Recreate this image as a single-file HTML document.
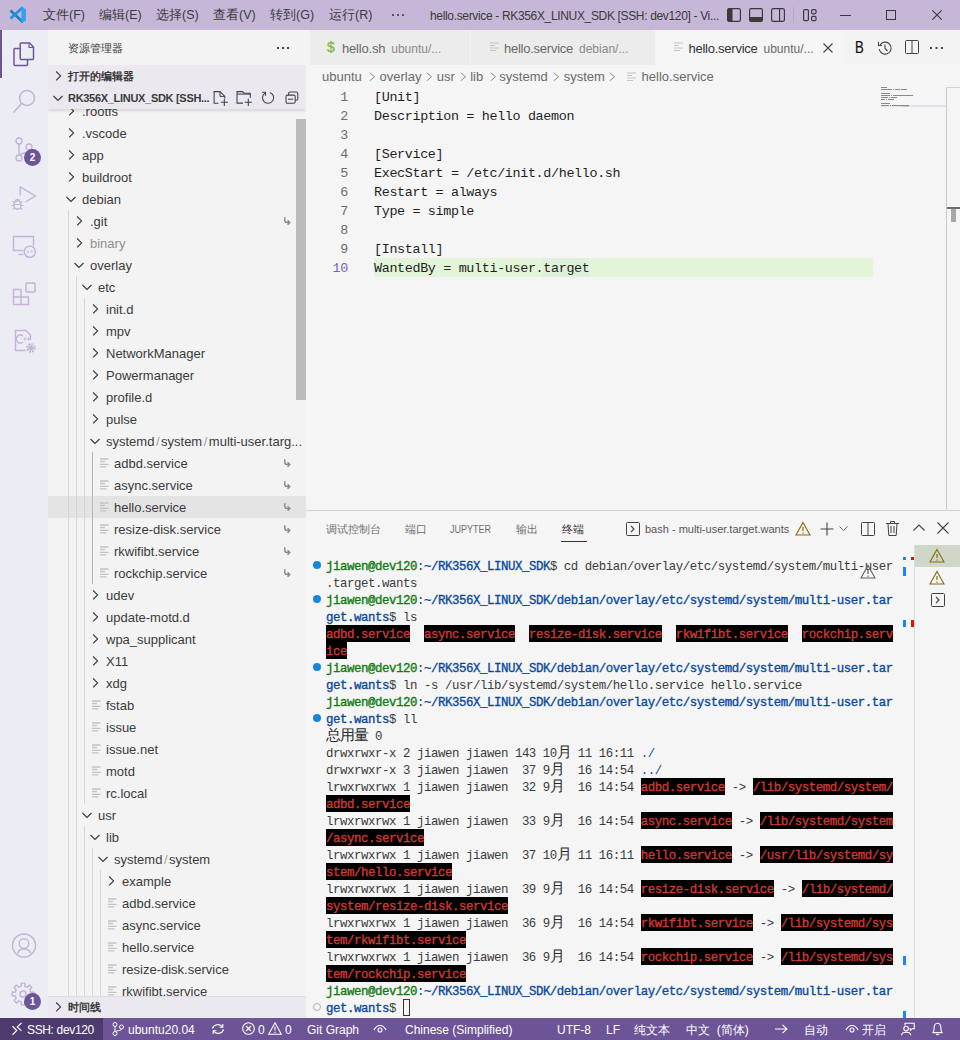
<!DOCTYPE html><html><head><meta charset="utf-8"><style>
*{box-sizing:border-box;margin:0;padding:0}
html,body{width:960px;height:1040px;overflow:hidden;background:#f5f5f5}
body{position:relative;font-family:"Liberation Sans", sans-serif;font-size:13px;color:#3b3b3b}
.a{position:absolute}
.nw{white-space:nowrap}
svg{position:absolute;overflow:visible}
#title{left:0;top:0;width:960px;height:30px;background:#c6b7d9}
#act{left:0;top:30px;width:48px;height:988px;background:#ececf5}
#side{left:48px;top:30px;width:258px;height:988px;background:#f3f3f3;overflow:hidden}
#tabs{left:306px;top:30px;width:654px;height:35px;background:#f3f3f3}
#status{left:0;top:1018px;width:960px;height:22px;background:#6c5497;color:#fff;font-size:12px}
.row{position:absolute;left:0;width:258px;height:22px;line-height:22px;white-space:nowrap}
.term{font-family:"Liberation Mono", monospace;font-size:12.4px;letter-spacing:-0.44px;line-height:17px;white-space:pre;color:#3b3b3b}
.rd{font-weight:normal;-webkit-text-stroke:0.35px #d03a32;display:inline-block;vertical-align:top;margin-top:-2px;padding-top:2px;height:17px;line-height:17px;color:#d03a32;background:#000}
.code{font-family:"Liberation Mono", monospace;font-size:13.4px;letter-spacing:-0.34px;line-height:19px;white-space:pre;color:#1f1f1f}
</style></head><body><div id="title" class="a">
<svg style="left:10px;top:7px" width="17" height="17"><path d="M1.5 4.5 L12 14.3" stroke="#1a7fcc" stroke-width="2.7" stroke-linecap="square"/><path d="M1.5 10.6 L12 1.2" stroke="#2590dc" stroke-width="2.7" stroke-linecap="square"/><path d="M11.4 0 L15.9 2.1 V13.7 L11.4 15.8 Z" fill="#32a2ee"/></svg>
<div class="a nw" style="left:43px;top:7px;font-size:12.5px;line-height:16px;color:#3a3a3a">文件(F)</div>
<div class="a nw" style="left:99px;top:7px;font-size:12.5px;line-height:16px;color:#3a3a3a">编辑(E)</div>
<div class="a nw" style="left:156px;top:7px;font-size:12.5px;line-height:16px;color:#3a3a3a">选择(S)</div>
<div class="a nw" style="left:213px;top:7px;font-size:12.5px;line-height:16px;color:#3a3a3a">查看(V)</div>
<div class="a nw" style="left:270px;top:7px;font-size:12.5px;line-height:16px;color:#3a3a3a">转到(G)</div>
<div class="a nw" style="left:329px;top:7px;font-size:12.5px;line-height:16px;color:#3a3a3a">运行(R)</div>
<svg style="left:392px;top:14px" width="12" height="2"><rect x="0" y="0" width="2" height="2" fill="#555"/><rect x="5" y="0" width="2" height="2" fill="#555"/><rect x="10" y="0" width="2" height="2" fill="#555"/></svg>
<div class="a nw" style="left:430px;top:8px;font-size:12px;letter-spacing:-0.34px;line-height:16px;color:#3a3a3a">hello.service - RK356X_LINUX_SDK [SSH: dev120] - Vi...</div>
<svg style="left:727px;top:8px" width="14" height="14"><rect x="0.6" y="0.6" width="12.8" height="12.8" rx="1.6" fill="none" stroke="#3a3a3a" stroke-width="1.2"/><path d="M2 0.6 H5.5 V13.4 H2 Q0.6 13.4 0.6 12 V2 Q0.6 0.6 2 0.6 Z" fill="#3a3a3a"/></svg>
<svg style="left:749px;top:8px" width="14" height="14"><rect x="0.6" y="0.6" width="12.8" height="12.8" rx="1.6" fill="none" stroke="#3a3a3a" stroke-width="1.2"/><path d="M0.6 9 H13.4 V12 Q13.4 13.4 12 13.4 H2 Q0.6 13.4 0.6 12 Z" fill="#3a3a3a"/></svg>
<svg style="left:771px;top:8px" width="14" height="14"><rect x="0.6" y="0.6" width="12.8" height="12.8" rx="1.6" fill="none" stroke="#3a3a3a" stroke-width="1.2"/><path d="M8.6 0.6 V13.4" stroke="#3a3a3a" stroke-width="1.2"/></svg>
<div class="a" style="left:793px;top:7px;width:1px;height:16px;background:#b5a6c8"></div>
<svg style="left:803px;top:9px" width="14" height="12"><rect x="0.6" y="0.6" width="4.8" height="11" rx="1.2" fill="none" stroke="#3a3a3a" stroke-width="1.2"/><rect x="8.6" y="0.6" width="4.4" height="4.2" rx="1.2" fill="none" stroke="#3a3a3a" stroke-width="1.2"/><rect x="8.6" y="7.4" width="4.4" height="4.2" rx="1.2" fill="none" stroke="#3a3a3a" stroke-width="1.2"/></svg>
<div class="a" style="left:840px;top:15px;width:10.5px;height:1px;background:#3a3a3a"></div>
<div class="a" style="left:886px;top:10px;width:10px;height:10px;border:1px solid #3a3a3a"></div>
<svg style="left:932px;top:10px" width="10" height="10"><path d="M0.3 0.3 L9.7 9.7 M9.7 0.3 L0.3 9.7" stroke="#3a3a3a" stroke-width="1.1"/></svg>
</div>
<div id="act" class="a">
<div class="a" style="left:0;top:0;width:2px;height:48px;background:#6c5497"></div>
<svg style="left:13px;top:12px" width="22" height="24" viewBox="0 0 22 24"><path d="M8.2 1 H16.5 L20.5 5 V16.5 Q20.5 17.5 19.5 17.5 H8.2 Q7.2 17.5 7.2 16.5 V2 Q7.2 1 8.2 1 Z" fill="none" stroke="#6c559a" stroke-width="1.5"/><path d="M16 1.5 V5.5 H20" fill="none" stroke="#6c559a" stroke-width="1.1"/><path d="M7.2 6.5 H2 Q1 6.5 1 7.5 V22.5 Q1 23.5 2 23.5 H13.5 Q14.5 23.5 14.5 22.5 V17.5" fill="none" stroke="#6c559a" stroke-width="1.5"/></svg>
<svg style="left:12px;top:58px" width="24" height="24"><circle cx="15" cy="10" r="7.5" fill="none" stroke="#c3b3d6" stroke-width="1.5"/><path d="M9.8 15.2 L1.5 24.5" stroke="#c3b3d6" stroke-width="1.6"/></svg>
<svg style="left:12px;top:107px" width="24" height="26"><circle cx="7" cy="4" r="3" fill="none" stroke="#c3b3d6" stroke-width="1.4"/><circle cx="7" cy="21" r="3" fill="none" stroke="#c3b3d6" stroke-width="1.4"/><circle cx="17" cy="10" r="3" fill="none" stroke="#c3b3d6" stroke-width="1.4"/><path d="M7 7 V18 M17 13 C17 17 9 15 8 18" fill="none" stroke="#c3b3d6" stroke-width="1.4"/></svg>
<div class="a" style="left:24px;top:119px;width:17px;height:17px;border-radius:50%;background:#6c5497;color:#fff;font-size:10px;line-height:17px;text-align:center;font-weight:bold">2</div>
<svg style="left:11px;top:156px" width="26" height="26"><path d="M9.2 9.5 V0.8 L24.5 10 L14.5 16" fill="none" stroke="#c3b3d6" stroke-width="1.4" stroke-linejoin="round"/><ellipse cx="6.5" cy="19" rx="3.6" ry="4.3" fill="#ececf5" stroke="#c3b3d6" stroke-width="1.4"/><path d="M1.5 15.5 L3.5 16.5 M11.5 15.5 L9.5 16.5 M0.5 19.5 H3 M12.5 19.5 H10 M1.5 23.5 L3.5 22 M11.5 23.5 L9.5 22 M4 14.5 L6.5 13.5 L9 14.5 M3.2 18.5 H9.8" fill="none" stroke="#c3b3d6" stroke-width="1.2"/></svg>
<svg style="left:12px;top:205px" width="26" height="24"><path d="M21.5 11 V1.5 H1.5 V15.5 H11.5" fill="none" stroke="#c3b3d6" stroke-width="1.4"/><path d="M6.5 19.5 H11.5" stroke="#c3b3d6" stroke-width="1.4"/><circle cx="17.8" cy="16.7" r="5.6" fill="none" stroke="#c3b3d6" stroke-width="1.4"/><path d="M15.2 15.5 L16.7 17 L15.2 18.5 M20.5 15 L19 16.5 L20.5 18" fill="none" stroke="#c3b3d6" stroke-width="1"/></svg>
<svg style="left:12px;top:252px" width="26" height="24"><path d="M1.5 7.5 H9 V15 H16.5 V22.5 H1.5 Z M9 15 V22.5 M1.5 15 H9" fill="none" stroke="#c3b3d6" stroke-width="1.4"/><rect x="14" y="1" width="9" height="9" rx="1" fill="none" stroke="#c3b3d6" stroke-width="1.4"/></svg>
<svg style="left:14px;top:299px" width="24" height="26"><path d="M11.5 21.5 H1.5 V1.5 H12 L16.5 6 V11" fill="none" stroke="#c3b3d6" stroke-width="1.4"/><path d="M9 7 A4 4 0 1 0 9 13" fill="none" stroke="#c3b3d6" stroke-width="1.3"/><path d="M9.5 10 H12.5 M11 8.5 V11.5 M13 10 H16 M14.5 8.5 V11.5" stroke="#c3b3d6" stroke-width="1"/><circle cx="17" cy="19" r="3.5" fill="none" stroke="#c3b3d6" stroke-width="2.5" stroke-dasharray="1.6 1.15"/><circle cx="17" cy="19" r="2.2" fill="#c3b3d6"/></svg>
<svg style="left:11px;top:903px" width="26" height="26"><circle cx="13" cy="12.5" r="11.5" fill="none" stroke="#c3b3d6" stroke-width="1.4"/><circle cx="13" cy="10.6" r="4.8" fill="none" stroke="#c3b3d6" stroke-width="1.4"/><path d="M6.5 20.5 C8 14.5 18 14.5 19.8 20.5" fill="none" stroke="#c3b3d6" stroke-width="1.4"/></svg>
<svg style="left:11px;top:951px" width="26" height="26"><path d="M19.39 9.94 L19.79 11.20 L22.86 11.28 L22.86 14.72 L19.79 14.80 L19.39 16.06 L18.78 17.24 L20.90 19.47 L18.47 21.90 L16.24 19.78 L15.06 20.39 L13.80 20.79 L13.72 23.86 L10.28 23.86 L10.20 20.79 L8.94 20.39 L7.76 19.78 L5.53 21.90 L3.10 19.47 L5.22 17.24 L4.61 16.06 L4.21 14.80 L1.14 14.72 L1.14 11.28 L4.21 11.20 L4.61 9.94 L5.22 8.76 L3.10 6.53 L5.53 4.10 L7.76 6.22 L8.94 5.61 L10.20 5.21 L10.28 2.14 L13.72 2.14 L13.80 5.21 L15.06 5.61 L16.24 6.22 L18.47 4.10 L20.90 6.53 L18.78 8.76 Z" fill="none" stroke="#c3b3d6" stroke-width="1.4" stroke-linejoin="round"/><circle cx="12" cy="13" r="3" fill="none" stroke="#c3b3d6" stroke-width="1.4"/></svg>
<div class="a" style="left:24px;top:963px;width:17px;height:17px;border-radius:50%;background:#6c5497;color:#fff;font-size:10px;line-height:17px;text-align:center;font-weight:bold">1</div>
</div>
<div id="side" class="a">
<div class="a nw" style="left:20px;top:11px;font-size:11px;line-height:14px;color:#3b3b3b">资源管理器</div>
<svg style="left:229px;top:17px" width="12" height="2"><rect x="0" y="0" width="2" height="2" fill="#444"/><rect x="5" y="0" width="2" height="2" fill="#444"/><rect x="10" y="0" width="2" height="2" fill="#444"/></svg>
<div class="a" style="left:0;top:70px;width:258px;height:896px;overflow:hidden">
<div class="a" style="left:0;top:396px;width:258px;height:22px;background:#e4e4e4"></div>
<div class="a" style="left:20px;top:110px;width:1px;height:790px;background:#d6d6d6"></div>
<div class="a" style="left:28px;top:176px;width:1px;height:724px;background:#d6d6d6"></div>
<div class="a" style="left:36px;top:198px;width:1px;height:506px;background:#d6d6d6"></div>
<div class="a" style="left:44px;top:352px;width:1px;height:132px;background:#b4b4b4"></div>
<div class="a" style="left:36px;top:726px;width:1px;height:174px;background:#d6d6d6"></div>
<div class="a" style="left:44px;top:748px;width:1px;height:152px;background:#d6d6d6"></div>
<div class="a" style="left:52px;top:770px;width:1px;height:130px;background:#d6d6d6"></div>
<svg style="left:20.2px;top:5px" width="8" height="12"><path d="M1.1 1.5 L5.6 5.9 L1.1 10.3" fill="none" stroke="#383838" stroke-width="1.1"/></svg>
<div class="a nw" style="left:34px;top:1px;line-height:22px;color:#3b3b3b">.rootfs</div>
<svg style="left:20.2px;top:27px" width="8" height="12"><path d="M1.1 1.5 L5.6 5.9 L1.1 10.3" fill="none" stroke="#383838" stroke-width="1.1"/></svg>
<div class="a nw" style="left:34px;top:23px;line-height:22px;color:#3b3b3b">.vscode</div>
<svg style="left:20.2px;top:49px" width="8" height="12"><path d="M1.1 1.5 L5.6 5.9 L1.1 10.3" fill="none" stroke="#383838" stroke-width="1.1"/></svg>
<div class="a nw" style="left:34px;top:45px;line-height:22px;color:#3b3b3b">app</div>
<svg style="left:20.2px;top:71px" width="8" height="12"><path d="M1.1 1.5 L5.6 5.9 L1.1 10.3" fill="none" stroke="#383838" stroke-width="1.1"/></svg>
<div class="a nw" style="left:34px;top:67px;line-height:22px;color:#3b3b3b">buildroot</div>
<svg style="left:18px;top:96px" width="12" height="8"><path d="M0.5 1 L5 5.4 L9.5 1" fill="none" stroke="#383838" stroke-width="1.1"/></svg>
<div class="a nw" style="left:34px;top:89px;line-height:22px;color:#3b3b3b">debian</div>
<svg style="left:28.2px;top:115px" width="8" height="12"><path d="M1.1 1.5 L5.6 5.9 L1.1 10.3" fill="none" stroke="#383838" stroke-width="1.1"/></svg>
<div class="a nw" style="left:42px;top:111px;line-height:22px;color:#3b3b3b">.git</div>
<svg style="left:235px;top:116px" width="8" height="10"><path d="M1.8 1.3 V4.3 Q1.8 6.5 4 6.5 H6.3 M4.6 4.3 L6.7 6.5 L4.6 8.7" fill="none" stroke="#8a8a8a" stroke-width="1.5"/></svg>
<svg style="left:28.2px;top:137px" width="8" height="12"><path d="M1.1 1.5 L5.6 5.9 L1.1 10.3" fill="none" stroke="#383838" stroke-width="1.1"/></svg>
<div class="a nw" style="left:42px;top:133px;line-height:22px;color:#8e8e8e">binary</div>
<svg style="left:26px;top:162px" width="12" height="8"><path d="M0.5 1 L5 5.4 L9.5 1" fill="none" stroke="#383838" stroke-width="1.1"/></svg>
<div class="a nw" style="left:42px;top:155px;line-height:22px;color:#3b3b3b">overlay</div>
<svg style="left:34px;top:184px" width="12" height="8"><path d="M0.5 1 L5 5.4 L9.5 1" fill="none" stroke="#383838" stroke-width="1.1"/></svg>
<div class="a nw" style="left:50px;top:177px;line-height:22px;color:#3b3b3b">etc</div>
<svg style="left:44.2px;top:203px" width="8" height="12"><path d="M1.1 1.5 L5.6 5.9 L1.1 10.3" fill="none" stroke="#383838" stroke-width="1.1"/></svg>
<div class="a nw" style="left:58px;top:199px;line-height:22px;color:#3b3b3b">init.d</div>
<svg style="left:44.2px;top:225px" width="8" height="12"><path d="M1.1 1.5 L5.6 5.9 L1.1 10.3" fill="none" stroke="#383838" stroke-width="1.1"/></svg>
<div class="a nw" style="left:58px;top:221px;line-height:22px;color:#3b3b3b">mpv</div>
<svg style="left:44.2px;top:247px" width="8" height="12"><path d="M1.1 1.5 L5.6 5.9 L1.1 10.3" fill="none" stroke="#383838" stroke-width="1.1"/></svg>
<div class="a nw" style="left:58px;top:243px;line-height:22px;color:#3b3b3b">NetworkManager</div>
<svg style="left:44.2px;top:269px" width="8" height="12"><path d="M1.1 1.5 L5.6 5.9 L1.1 10.3" fill="none" stroke="#383838" stroke-width="1.1"/></svg>
<div class="a nw" style="left:58px;top:265px;line-height:22px;color:#3b3b3b">Powermanager</div>
<svg style="left:44.2px;top:291px" width="8" height="12"><path d="M1.1 1.5 L5.6 5.9 L1.1 10.3" fill="none" stroke="#383838" stroke-width="1.1"/></svg>
<div class="a nw" style="left:58px;top:287px;line-height:22px;color:#3b3b3b">profile.d</div>
<svg style="left:44.2px;top:313px" width="8" height="12"><path d="M1.1 1.5 L5.6 5.9 L1.1 10.3" fill="none" stroke="#383838" stroke-width="1.1"/></svg>
<div class="a nw" style="left:58px;top:309px;line-height:22px;color:#3b3b3b">pulse</div>
<svg style="left:42px;top:338px" width="12" height="8"><path d="M0.5 1 L5 5.4 L9.5 1" fill="none" stroke="#383838" stroke-width="1.1"/></svg>
<div class="a nw" style="left:58px;top:331px;line-height:22px;color:#3b3b3b">systemd<span style="color:#a0a0a0;padding:0 1.5px">/</span>system<span style="color:#a0a0a0;padding:0 1.5px">/</span>multi-user.targ...</div>
<svg style="left:51.75px;top:358px" width="10" height="10"><path d="M0 1 H8.5 M0 3.5 H5 M0 6.4 H8.5 M0 8.9 H6.25" stroke="#c4c4c4" stroke-width="1.4"/></svg>
<div class="a nw" style="left:66px;top:353px;line-height:22px;color:#3b3b3b">adbd.service</div>
<svg style="left:235px;top:358px" width="8" height="10"><path d="M1.8 1.3 V4.3 Q1.8 6.5 4 6.5 H6.3 M4.6 4.3 L6.7 6.5 L4.6 8.7" fill="none" stroke="#8a8a8a" stroke-width="1.5"/></svg>
<svg style="left:51.75px;top:380px" width="10" height="10"><path d="M0 1 H8.5 M0 3.5 H5 M0 6.4 H8.5 M0 8.9 H6.25" stroke="#c4c4c4" stroke-width="1.4"/></svg>
<div class="a nw" style="left:66px;top:375px;line-height:22px;color:#3b3b3b">async.service</div>
<svg style="left:235px;top:380px" width="8" height="10"><path d="M1.8 1.3 V4.3 Q1.8 6.5 4 6.5 H6.3 M4.6 4.3 L6.7 6.5 L4.6 8.7" fill="none" stroke="#8a8a8a" stroke-width="1.5"/></svg>
<svg style="left:51.75px;top:402px" width="10" height="10"><path d="M0 1 H8.5 M0 3.5 H5 M0 6.4 H8.5 M0 8.9 H6.25" stroke="#c4c4c4" stroke-width="1.4"/></svg>
<div class="a nw" style="left:66px;top:397px;line-height:22px;color:#3b3b3b">hello.service</div>
<svg style="left:235px;top:402px" width="8" height="10"><path d="M1.8 1.3 V4.3 Q1.8 6.5 4 6.5 H6.3 M4.6 4.3 L6.7 6.5 L4.6 8.7" fill="none" stroke="#8a8a8a" stroke-width="1.5"/></svg>
<svg style="left:51.75px;top:424px" width="10" height="10"><path d="M0 1 H8.5 M0 3.5 H5 M0 6.4 H8.5 M0 8.9 H6.25" stroke="#c4c4c4" stroke-width="1.4"/></svg>
<div class="a nw" style="left:66px;top:419px;line-height:22px;color:#3b3b3b">resize-disk.service</div>
<svg style="left:235px;top:424px" width="8" height="10"><path d="M1.8 1.3 V4.3 Q1.8 6.5 4 6.5 H6.3 M4.6 4.3 L6.7 6.5 L4.6 8.7" fill="none" stroke="#8a8a8a" stroke-width="1.5"/></svg>
<svg style="left:51.75px;top:446px" width="10" height="10"><path d="M0 1 H8.5 M0 3.5 H5 M0 6.4 H8.5 M0 8.9 H6.25" stroke="#c4c4c4" stroke-width="1.4"/></svg>
<div class="a nw" style="left:66px;top:441px;line-height:22px;color:#3b3b3b">rkwifibt.service</div>
<svg style="left:235px;top:446px" width="8" height="10"><path d="M1.8 1.3 V4.3 Q1.8 6.5 4 6.5 H6.3 M4.6 4.3 L6.7 6.5 L4.6 8.7" fill="none" stroke="#8a8a8a" stroke-width="1.5"/></svg>
<svg style="left:51.75px;top:468px" width="10" height="10"><path d="M0 1 H8.5 M0 3.5 H5 M0 6.4 H8.5 M0 8.9 H6.25" stroke="#c4c4c4" stroke-width="1.4"/></svg>
<div class="a nw" style="left:66px;top:463px;line-height:22px;color:#3b3b3b">rockchip.service</div>
<svg style="left:235px;top:468px" width="8" height="10"><path d="M1.8 1.3 V4.3 Q1.8 6.5 4 6.5 H6.3 M4.6 4.3 L6.7 6.5 L4.6 8.7" fill="none" stroke="#8a8a8a" stroke-width="1.5"/></svg>
<svg style="left:44.2px;top:489px" width="8" height="12"><path d="M1.1 1.5 L5.6 5.9 L1.1 10.3" fill="none" stroke="#383838" stroke-width="1.1"/></svg>
<div class="a nw" style="left:58px;top:485px;line-height:22px;color:#3b3b3b">udev</div>
<svg style="left:44.2px;top:511px" width="8" height="12"><path d="M1.1 1.5 L5.6 5.9 L1.1 10.3" fill="none" stroke="#383838" stroke-width="1.1"/></svg>
<div class="a nw" style="left:58px;top:507px;line-height:22px;color:#3b3b3b">update-motd.d</div>
<svg style="left:44.2px;top:533px" width="8" height="12"><path d="M1.1 1.5 L5.6 5.9 L1.1 10.3" fill="none" stroke="#383838" stroke-width="1.1"/></svg>
<div class="a nw" style="left:58px;top:529px;line-height:22px;color:#3b3b3b">wpa_supplicant</div>
<svg style="left:44.2px;top:555px" width="8" height="12"><path d="M1.1 1.5 L5.6 5.9 L1.1 10.3" fill="none" stroke="#383838" stroke-width="1.1"/></svg>
<div class="a nw" style="left:58px;top:551px;line-height:22px;color:#3b3b3b">X11</div>
<svg style="left:44.2px;top:577px" width="8" height="12"><path d="M1.1 1.5 L5.6 5.9 L1.1 10.3" fill="none" stroke="#383838" stroke-width="1.1"/></svg>
<div class="a nw" style="left:58px;top:573px;line-height:22px;color:#3b3b3b">xdg</div>
<svg style="left:43.75px;top:600px" width="10" height="10"><path d="M0 1 H8.5 M0 3.5 H5 M0 6.4 H8.5 M0 8.9 H6.25" stroke="#c4c4c4" stroke-width="1.4"/></svg>
<div class="a nw" style="left:58px;top:595px;line-height:22px;color:#3b3b3b">fstab</div>
<svg style="left:43.75px;top:622px" width="10" height="10"><path d="M0 1 H8.5 M0 3.5 H5 M0 6.4 H8.5 M0 8.9 H6.25" stroke="#c4c4c4" stroke-width="1.4"/></svg>
<div class="a nw" style="left:58px;top:617px;line-height:22px;color:#3b3b3b">issue</div>
<svg style="left:43.75px;top:644px" width="10" height="10"><path d="M0 1 H8.5 M0 3.5 H5 M0 6.4 H8.5 M0 8.9 H6.25" stroke="#c4c4c4" stroke-width="1.4"/></svg>
<div class="a nw" style="left:58px;top:639px;line-height:22px;color:#3b3b3b">issue.net</div>
<svg style="left:43.75px;top:666px" width="10" height="10"><path d="M0 1 H8.5 M0 3.5 H5 M0 6.4 H8.5 M0 8.9 H6.25" stroke="#c4c4c4" stroke-width="1.4"/></svg>
<div class="a nw" style="left:58px;top:661px;line-height:22px;color:#3b3b3b">motd</div>
<svg style="left:43.75px;top:688px" width="10" height="10"><path d="M0 1 H8.5 M0 3.5 H5 M0 6.4 H8.5 M0 8.9 H6.25" stroke="#c4c4c4" stroke-width="1.4"/></svg>
<div class="a nw" style="left:58px;top:683px;line-height:22px;color:#3b3b3b">rc.local</div>
<svg style="left:34px;top:712px" width="12" height="8"><path d="M0.5 1 L5 5.4 L9.5 1" fill="none" stroke="#383838" stroke-width="1.1"/></svg>
<div class="a nw" style="left:50px;top:705px;line-height:22px;color:#3b3b3b">usr</div>
<svg style="left:42px;top:734px" width="12" height="8"><path d="M0.5 1 L5 5.4 L9.5 1" fill="none" stroke="#383838" stroke-width="1.1"/></svg>
<div class="a nw" style="left:58px;top:727px;line-height:22px;color:#3b3b3b">lib</div>
<svg style="left:50px;top:756px" width="12" height="8"><path d="M0.5 1 L5 5.4 L9.5 1" fill="none" stroke="#383838" stroke-width="1.1"/></svg>
<div class="a nw" style="left:66px;top:749px;line-height:22px;color:#3b3b3b">systemd<span style="color:#a0a0a0;padding:0 1.5px">/</span>system</div>
<svg style="left:60.2px;top:775px" width="8" height="12"><path d="M1.1 1.5 L5.6 5.9 L1.1 10.3" fill="none" stroke="#383838" stroke-width="1.1"/></svg>
<div class="a nw" style="left:74px;top:771px;line-height:22px;color:#3b3b3b">example</div>
<svg style="left:59.75px;top:798px" width="10" height="10"><path d="M0 1 H8.5 M0 3.5 H5 M0 6.4 H8.5 M0 8.9 H6.25" stroke="#c4c4c4" stroke-width="1.4"/></svg>
<div class="a nw" style="left:74px;top:793px;line-height:22px;color:#3b3b3b">adbd.service</div>
<svg style="left:59.75px;top:820px" width="10" height="10"><path d="M0 1 H8.5 M0 3.5 H5 M0 6.4 H8.5 M0 8.9 H6.25" stroke="#c4c4c4" stroke-width="1.4"/></svg>
<div class="a nw" style="left:74px;top:815px;line-height:22px;color:#3b3b3b">async.service</div>
<svg style="left:59.75px;top:842px" width="10" height="10"><path d="M0 1 H8.5 M0 3.5 H5 M0 6.4 H8.5 M0 8.9 H6.25" stroke="#c4c4c4" stroke-width="1.4"/></svg>
<div class="a nw" style="left:74px;top:837px;line-height:22px;color:#3b3b3b">hello.service</div>
<svg style="left:59.75px;top:864px" width="10" height="10"><path d="M0 1 H8.5 M0 3.5 H5 M0 6.4 H8.5 M0 8.9 H6.25" stroke="#c4c4c4" stroke-width="1.4"/></svg>
<div class="a nw" style="left:74px;top:859px;line-height:22px;color:#3b3b3b">resize-disk.service</div>
<svg style="left:59.75px;top:886px" width="10" height="10"><path d="M0 1 H8.5 M0 3.5 H5 M0 6.4 H8.5 M0 8.9 H6.25" stroke="#c4c4c4" stroke-width="1.4"/></svg>
<div class="a nw" style="left:74px;top:881px;line-height:22px;color:#3b3b3b">rkwifibt.service</div>
</div>
<div class="a" style="left:0;top:35px;width:258px;height:22px;background:#ece8ef"></div>
<svg style="left:7px;top:40px" width="8" height="12"><path d="M1.1 1.5 L5.6 5.9 L1.1 10.3" fill="none" stroke="#383838" stroke-width="1.1"/></svg>
<div class="a nw" style="left:20px;top:35px;line-height:22px;font-size:11px;font-weight:bold;color:#3b3b3b">打开的编辑器</div>
<div class="a" style="left:0;top:57px;width:258px;height:22px;background:#ece8ef;box-shadow:0 2px 3px rgba(0,0,0,0.12)"></div>
<svg style="left:5px;top:65px" width="12" height="8"><path d="M0.5 1 L5 5.4 L9.5 1" fill="none" stroke="#383838" stroke-width="1.1"/></svg>
<div class="a nw" style="left:20px;top:57px;line-height:22px;font-size:11px;letter-spacing:-0.3px;font-weight:bold;color:#3b3b3b">RK356X_LINUX_SDK [SSH...</div>
<svg style="left:164px;top:60px" width="18" height="18"><path d="M6.5 13.3 H2.1 V1.6 H8 L12.8 6.4 V8.5" fill="none" stroke="#424242" stroke-width="1.05"/><path d="M8 1.6 V6.4 H12.8" fill="none" stroke="#424242" stroke-width="1"/><path d="M12.3 8.7 V15.9 M8.75 12.3 H15.9" stroke="#424242" stroke-width="1.05"/></svg>
<svg style="left:187px;top:60px" width="18" height="18"><path d="M8 13.1 H2 V1.6 H7.5 L9 3.2 H15.3 V8" fill="none" stroke="#424242" stroke-width="1.05"/><path d="M2 4.1 H15.3" stroke="#424242" stroke-width="1"/><path d="M13.3 8.7 V15.9 M9.7 12.3 H16.9" stroke="#424242" stroke-width="1.05"/></svg>
<svg style="left:212px;top:58px" width="16" height="18"><path d="M9.9 4.4 A5.6 5.6 0 1 1 4.9 5.1" fill="none" stroke="#424242" stroke-width="1.05"/><path d="M2 4.3 H5.5 V7.8" fill="none" stroke="#424242" stroke-width="1.05"/></svg>
<svg style="left:236px;top:60px" width="16" height="16"><rect x="4.6" y="2" width="9.2" height="8.2" rx="1.5" fill="#ece8ef" stroke="#424242" stroke-width="1.05"/><rect x="2" y="5.1" width="9.2" height="8.2" rx="1.5" fill="#ece8ef" stroke="#424242" stroke-width="1.05"/><path d="M4 9.2 H9.2" stroke="#424242" stroke-width="1.05"/></svg>
<div class="a" style="left:248px;top:89px;width:10px;height:281px;background:#bababa"></div>
<div class="a" style="left:0;top:966px;width:258px;height:22px;background:#ece8ef;border-top:1px solid #e0dce3"></div>
<svg style="left:7px;top:971px" width="8" height="12"><path d="M1.1 1.5 L5.6 5.9 L1.1 10.3" fill="none" stroke="#383838" stroke-width="1.1"/></svg>
<div class="a nw" style="left:20px;top:966px;line-height:22px;font-size:11px;font-weight:bold;color:#3b3b3b">时间线</div>
</div>
<div id="tabs" class="a">
<div class="a" style="left:4px;top:0;width:160px;height:35px;background:#ececec"></div>
<div class="a nw" style="left:21px;top:9px;font-size:14px;color:#8ab83a;-webkit-text-stroke:0.3px #8ab83a;line-height:16px">$</div>
<div class="a nw" style="left:36px;top:11px;line-height:16px;color:#6a6a6a"><span style="letter-spacing:-0.2px">hello.sh</span><span style="font-size:12px;color:#8a8a8a;margin-left:6px">ubuntu/...</span></div>
<div class="a" style="left:164px;top:0;width:1px;height:35px;background:#f3f3f3"></div>
<div class="a" style="left:165px;top:0;width:184px;height:35px;background:#ececec"></div>
<svg style="left:184px;top:12px" width="10" height="10"><path d="M0 1 H9 M0 3.5 H5 M0 6 H9 M0 8.5 H6" stroke="#c4c4c4" stroke-width="1.2"/></svg>
<div class="a nw" style="left:198px;top:11px;line-height:16px;color:#6a6a6a"><span style="letter-spacing:-0.25px">hello.service</span><span style="font-size:12px;color:#8a8a8a;margin-left:6px">debian/...</span></div>
<div class="a" style="left:349px;top:0;width:188px;height:35px;background:#f5f5f5"></div>
<svg style="left:368px;top:12px" width="10" height="10"><path d="M0 1 H9 M0 3.5 H5 M0 6 H9 M0 8.5 H6" stroke="#c4c4c4" stroke-width="1.2"/></svg>
<div class="a nw" style="left:382.5px;top:11px;line-height:16px;color:#333"><span style="letter-spacing:-0.25px">hello.service</span><span style="font-size:12px;color:#6a6a6a;margin-left:6px">ubuntu/...</span></div>
<svg style="left:517px;top:13px" width="10" height="10"><path d="M0.5 0.5 L9.5 9.5 M9.5 0.5 L0.5 9.5" stroke="#424242" stroke-width="1.1"/></svg>
<div class="a nw" style="left:549px;top:10px;font-size:16px;line-height:16px;color:#111;-webkit-text-stroke:0.2px #111;transform:scaleX(0.82);transform-origin:0 0">B</div>
<svg style="left:571px;top:10px" width="16" height="16"><path d="M3 5 A6 6 0 1 1 2.2 9" fill="none" stroke="#424242" stroke-width="1.1"/><path d="M1.5 2 V5.5 H5" fill="none" stroke="#424242" stroke-width="1.1"/><path d="M8 4.5 V8.5 L10.5 11" fill="none" stroke="#424242" stroke-width="1.1"/></svg>
<svg style="left:599px;top:10px" width="14" height="14"><rect x="0.5" y="0.5" width="13" height="13" rx="1" fill="none" stroke="#424242" stroke-width="1"/><path d="M7 0.5 V13.5" stroke="#424242"/></svg>
<svg style="left:624px;top:16.5px" width="14" height="2"><rect x="0" y="0" width="2" height="2" fill="#444"/><rect x="5.5" y="0" width="2" height="2" fill="#444"/><rect x="11" y="0" width="2" height="2" fill="#444"/></svg>
</div>
<div class="a nw" style="left:322px;top:68px;line-height:18px;color:#6a6a6a;font-size:13px">ubuntu</div>
<svg style="left:369px;top:72px" width="7" height="10"><path d="M0.8 0.8 L5.5 4.8 L0.8 8.8" fill="none" stroke="#8a8a8a" stroke-width="1"/></svg>
<div class="a nw" style="left:379.5px;top:68px;line-height:18px;color:#6a6a6a;font-size:13px">overlay</div>
<svg style="left:426.4px;top:72px" width="7" height="10"><path d="M0.8 0.8 L5.5 4.8 L0.8 8.8" fill="none" stroke="#8a8a8a" stroke-width="1"/></svg>
<div class="a nw" style="left:436.8px;top:68px;line-height:18px;color:#6a6a6a;font-size:13px">usr</div>
<svg style="left:459.7px;top:72px" width="7" height="10"><path d="M0.8 0.8 L5.5 4.8 L0.8 8.8" fill="none" stroke="#8a8a8a" stroke-width="1"/></svg>
<div class="a nw" style="left:470.2px;top:68px;line-height:18px;color:#6a6a6a;font-size:13px">lib</div>
<svg style="left:490px;top:72px" width="7" height="10"><path d="M0.8 0.8 L5.5 4.8 L0.8 8.8" fill="none" stroke="#8a8a8a" stroke-width="1"/></svg>
<div class="a nw" style="left:499.3px;top:68px;line-height:18px;color:#6a6a6a;font-size:13px">systemd</div>
<svg style="left:552.7px;top:72px" width="7" height="10"><path d="M0.8 0.8 L5.5 4.8 L0.8 8.8" fill="none" stroke="#8a8a8a" stroke-width="1"/></svg>
<div class="a nw" style="left:563.7px;top:68px;line-height:18px;color:#6a6a6a;font-size:13px">system</div>
<svg style="left:608.8px;top:72px" width="7" height="10"><path d="M0.8 0.8 L5.5 4.8 L0.8 8.8" fill="none" stroke="#8a8a8a" stroke-width="1"/></svg>
<svg style="left:627px;top:72px" width="10" height="10"><path d="M0 1 H9 M0 3.5 H5 M0 6 H9 M0 8.5 H6" stroke="#c4c4c4" stroke-width="1.2"/></svg>
<div class="a nw" style="left:641.6px;top:68px;line-height:18px;color:#6a6a6a;font-size:13px">hello.service</div>
<div class="a" style="left:374px;top:258px;width:499px;height:19px;background:#e3f5d8"></div>
<div class="a" style="left:543px;top:258px;width:46px;height:19px;background:#e0efd9"></div>
<div class="a code" style="left:334px;top:88px;width:14px;text-align:right;color:#6e6e6e">1</div>
<div class="a code" style="left:374px;top:88px">[Unit]</div>
<div class="a code" style="left:334px;top:107px;width:14px;text-align:right;color:#6e6e6e">2</div>
<div class="a code" style="left:374px;top:107px">Description = hello daemon</div>
<div class="a code" style="left:334px;top:126px;width:14px;text-align:right;color:#6e6e6e">3</div>
<div class="a code" style="left:374px;top:126px"></div>
<div class="a code" style="left:334px;top:145px;width:14px;text-align:right;color:#6e6e6e">4</div>
<div class="a code" style="left:374px;top:145px">[Service]</div>
<div class="a code" style="left:334px;top:164px;width:14px;text-align:right;color:#6e6e6e">5</div>
<div class="a code" style="left:374px;top:164px">ExecStart = /etc/init.d/hello.sh</div>
<div class="a code" style="left:334px;top:183px;width:14px;text-align:right;color:#6e6e6e">6</div>
<div class="a code" style="left:374px;top:183px">Restart = always</div>
<div class="a code" style="left:334px;top:202px;width:14px;text-align:right;color:#6e6e6e">7</div>
<div class="a code" style="left:374px;top:202px">Type = simple</div>
<div class="a code" style="left:334px;top:221px;width:14px;text-align:right;color:#6e6e6e">8</div>
<div class="a code" style="left:374px;top:221px"></div>
<div class="a code" style="left:334px;top:240px;width:14px;text-align:right;color:#6e6e6e">9</div>
<div class="a code" style="left:374px;top:240px">[Install]</div>
<div class="a code" style="left:326px;top:259px;width:22px;text-align:right;color:#7a5fb5">10</div>
<div class="a code" style="left:374px;top:259px">WantedBy = multi-user.target</div>
<div class="a" style="left:881px;top:105px;width:65px;height:2px;background:#dfe2ea"></div><div class="a" style="left:903px;top:105px;width:6px;height:2px;background:#c8c8c8"></div><div class="a" style="left:881px;top:87.4px;width:6px;height:1.1px;background:#8a8a8a"></div><div class="a" style="left:881px;top:89.4px;width:11px;height:1.1px;background:#8a8a8a"></div><div class="a" style="left:893px;top:89.4px;width:1px;height:1.1px;background:#8a8a8a"></div><div class="a" style="left:895px;top:89.4px;width:5px;height:1.1px;background:#8a8a8a"></div><div class="a" style="left:901px;top:89.4px;width:6px;height:1.1px;background:#8a8a8a"></div><div class="a" style="left:881px;top:93.4px;width:9px;height:1.1px;background:#8a8a8a"></div><div class="a" style="left:881px;top:95.4px;width:9px;height:1.1px;background:#8a8a8a"></div><div class="a" style="left:891px;top:95.4px;width:1px;height:1.1px;background:#8a8a8a"></div><div class="a" style="left:893px;top:95.4px;width:20px;height:1.1px;background:#8a8a8a"></div><div class="a" style="left:881px;top:97.4px;width:7px;height:1.1px;background:#8a8a8a"></div><div class="a" style="left:889px;top:97.4px;width:1px;height:1.1px;background:#8a8a8a"></div><div class="a" style="left:891px;top:97.4px;width:6px;height:1.1px;background:#8a8a8a"></div><div class="a" style="left:881px;top:99.4px;width:4px;height:1.1px;background:#8a8a8a"></div><div class="a" style="left:886px;top:99.4px;width:1px;height:1.1px;background:#8a8a8a"></div><div class="a" style="left:888px;top:99.4px;width:6px;height:1.1px;background:#8a8a8a"></div><div class="a" style="left:881px;top:103.4px;width:9px;height:1.1px;background:#8a8a8a"></div><div class="a" style="left:881px;top:105.4px;width:8px;height:1.1px;background:#8a8a8a"></div><div class="a" style="left:890px;top:105.4px;width:1px;height:1.1px;background:#8a8a8a"></div><div class="a" style="left:892px;top:105.4px;width:17px;height:1.1px;background:#8a8a8a"></div>
<div class="a" style="left:946px;top:87px;width:1px;height:423px;background:#c8c8c8"></div>
<div class="a" style="left:946px;top:87px;width:14px;height:1px;background:#d0d0d0"></div>
<div class="a" style="left:947px;top:207px;width:13px;height:2px;background:#6e6a70"></div>
<div class="a" style="left:951px;top:209px;width:5px;height:13px;background:#a8a8a8"></div>
<div class="a" style="left:306px;top:510px;width:654px;height:1px;background:#d4d4d4"></div>
<div class="a nw" style="left:326px;top:521px;font-size:11px;line-height:16px;color:#707070;">调试控制台</div>
<div class="a nw" style="left:405px;top:521px;font-size:11px;line-height:16px;color:#707070;">端口</div>
<div class="a nw" style="left:450px;top:521px;font-size:11px;line-height:16px;color:#707070;transform:scaleX(0.82);transform-origin:0 0;">JUPYTER</div>
<div class="a nw" style="left:516px;top:521px;font-size:11px;line-height:16px;color:#707070;">输出</div>
<div class="a nw" style="left:562px;top:521px;font-size:11px;line-height:16px;color:#333;">终端</div>
<div class="a" style="left:561px;top:541px;width:26px;height:1px;background:#333"></div>
<svg style="left:626px;top:522px" width="14" height="14"><rect x="0.5" y="0.5" width="13" height="13" rx="1" fill="none" stroke="#424242"/><path d="M5 4 L8 7 L5 10" fill="none" stroke="#424242" stroke-width="1.1"/></svg>
<div class="a nw" style="left:645px;top:521px;font-size:11px;line-height:16px;color:#555">bash - multi-user.target.wants</div>
<svg style="left:795px;top:521px" width="16" height="15"><path d="M8 1.5 L15 14 H1 Z" fill="none" stroke="#8a6a10" stroke-width="1.1"/><path d="M8 6 V10 M8 11.5 V12.8" stroke="#8a6a10" stroke-width="1.2"/></svg>
<svg style="left:820px;top:522px" width="14" height="14"><path d="M7 0.5 V13.5 M0.5 7 H13.5" stroke="#424242" stroke-width="1.1"/></svg>
<svg style="left:839px;top:526px" width="9" height="6"><path d="M0.5 0.5 L4.5 4.5 L8.5 0.5" fill="none" stroke="#616161"/></svg>
<svg style="left:861px;top:522px" width="14" height="14"><rect x="0.5" y="0.5" width="13" height="13" rx="1" fill="none" stroke="#424242"/><path d="M7 0.5 V13.5" stroke="#424242"/></svg>
<svg style="left:886px;top:521px" width="13" height="15"><path d="M0 2.5 H13 M4.5 2.5 V0.5 H8.5 V2.5 M2 2.5 L2.8 14.5 H10.2 L11 2.5 M5 5 V12 M8 5 V12" fill="none" stroke="#424242" stroke-width="1"/></svg>
<svg style="left:913px;top:524px" width="12" height="8"><path d="M0.5 6.5 L6 1 L11.5 6.5" fill="none" stroke="#424242" stroke-width="1.1"/></svg>
<svg style="left:936.5px;top:522px" width="12" height="12"><path d="M0.5 0.5 L11.5 11.5 M11.5 0.5 L0.5 11.5" stroke="#424242" stroke-width="1.1"/></svg>
<div class="a" style="left:914px;top:545px;width:46px;height:473px;border-left:1px solid #dcdcdc"></div>
<div class="a" style="left:915px;top:545px;width:45px;height:22px;background:#cfd8c8"></div>
<svg style="left:929px;top:548px" width="16" height="15"><path d="M8 1.5 L15 14 H1 Z" fill="none" stroke="#8a6a10" stroke-width="1.1"/><path d="M8 6 V10 M8 11.5 V12.8" stroke="#8a6a10" stroke-width="1.2"/></svg>
<svg style="left:929px;top:570px" width="16" height="15"><path d="M8 1.5 L15 14 H1 Z" fill="none" stroke="#8a6a10" stroke-width="1.1"/><path d="M8 6 V10 M8 11.5 V12.8" stroke="#8a6a10" stroke-width="1.2"/></svg>
<svg style="left:930.5px;top:593px" width="14" height="14"><rect x="0.5" y="0.5" width="13" height="13" rx="1" fill="none" stroke="#424242"/><path d="M5 4 L8 7 L5 10" fill="none" stroke="#424242" stroke-width="1.1"/></svg>
<div class="a" style="left:903px;top:557px;width:3px;height:3px;background:#1a85ff"></div>
<div class="a" style="left:911px;top:557px;width:3px;height:3px;background:#e51400"></div>
<div class="a" style="left:903px;top:567px;width:3px;height:9px;background:#1a85ff"></div>
<div class="a" style="left:903px;top:620px;width:3px;height:7px;background:#1a85ff"></div>
<div class="a" style="left:911px;top:620px;width:3px;height:7px;background:#e51400"></div>
<div class="a" style="left:903px;top:956px;width:3px;height:9px;background:#1a85ff"></div>
<div class="a" style="left:903px;top:1011px;width:3px;height:7px;background:#1a85ff"></div>
<div class="a" style="left:326px;top:557px;width:580px;height:461px;overflow:hidden">
<div class="a term" style="left:0;top:2px"><b style="color:#0f7a12;font-weight:normal;-webkit-text-stroke:0.35px #0f7a12">jiawen@dev120</b>:<b style="color:#0a4a9e;font-weight:normal;-webkit-text-stroke:0.35px #0a4a9e">~/RK356X_LINUX_SDK</b>$ cd debian/overlay/etc/systemd/system/multi-user</div>
<div class="a term" style="left:0;top:19px">.target.wants</div>
<div class="a term" style="left:0;top:36px"><b style="color:#0f7a12;font-weight:normal;-webkit-text-stroke:0.35px #0f7a12">jiawen@dev120</b>:<b style="color:#0a4a9e;font-weight:normal;-webkit-text-stroke:0.35px #0a4a9e">~/RK356X_LINUX_SDK/debian/overlay/etc/systemd/system/multi-user.tar</b></div>
<div class="a term" style="left:0;top:53px"><b style="color:#0a4a9e;font-weight:normal;-webkit-text-stroke:0.35px #0a4a9e">get.wants</b>$ ls</div>
<div class="a term" style="left:0;top:70px"><b class="rd">adbd.service</b>  <b class="rd">async.service</b>  <b class="rd">resize-disk.service</b>  <b class="rd">rkwifibt.service</b>  <b class="rd">rockchip.serv</b></div>
<div class="a term" style="left:0;top:87px"><b class="rd">ice</b></div>
<div class="a term" style="left:0;top:104px"><b style="color:#0f7a12;font-weight:normal;-webkit-text-stroke:0.35px #0f7a12">jiawen@dev120</b>:<b style="color:#0a4a9e;font-weight:normal;-webkit-text-stroke:0.35px #0a4a9e">~/RK356X_LINUX_SDK/debian/overlay/etc/systemd/system/multi-user.tar</b></div>
<div class="a term" style="left:0;top:121px"><b style="color:#0a4a9e;font-weight:normal;-webkit-text-stroke:0.35px #0a4a9e">get.wants</b>$ ln -s /usr/lib/systemd/system/hello.service hello.service</div>
<div class="a term" style="left:0;top:138px"><b style="color:#0f7a12;font-weight:normal;-webkit-text-stroke:0.35px #0f7a12">jiawen@dev120</b>:<b style="color:#0a4a9e;font-weight:normal;-webkit-text-stroke:0.35px #0a4a9e">~/RK356X_LINUX_SDK/debian/overlay/etc/systemd/system/multi-user.tar</b></div>
<div class="a term" style="left:0;top:155px"><b style="color:#0a4a9e;font-weight:normal;-webkit-text-stroke:0.35px #0a4a9e">get.wants</b>$ ll</div>
<div class="a term" style="left:0;top:172px"><span style="display:inline-block;vertical-align:top;height:17px;line-height:17px;width:14px;letter-spacing:0;font-size:14.5px;text-align:center;position:relative;top:-1px;color:#2a2a2a;">总</span><span style="display:inline-block;vertical-align:top;height:17px;line-height:17px;width:14px;letter-spacing:0;font-size:14.5px;text-align:center;position:relative;top:-1px;color:#2a2a2a;">用</span><span style="display:inline-block;vertical-align:top;height:17px;line-height:17px;width:14px;letter-spacing:0;font-size:14.5px;text-align:center;position:relative;top:-1px;color:#2a2a2a;">量</span> 0</div>
<div class="a term" style="left:0;top:189px">drwxrwxr-x 2 jiawen jiawen 143 10<span style="display:inline-block;vertical-align:top;height:17px;line-height:17px;width:14px;letter-spacing:0;font-size:14.5px;text-align:center;position:relative;top:-1px;color:#2a2a2a;">月</span> 11 16:11 <span style="color:#0451a5">./</span></div>
<div class="a term" style="left:0;top:206px">drwxrwxr-x 3 jiawen jiawen  37 9<span style="display:inline-block;vertical-align:top;height:17px;line-height:17px;width:14px;letter-spacing:0;font-size:14.5px;text-align:center;position:relative;top:-1px;color:#2a2a2a;">月</span>  16 14:54 <span style="color:#0451a5">../</span></div>
<div class="a term" style="left:0;top:223px">lrwxrwxrwx 1 jiawen jiawen  32 9<span style="display:inline-block;vertical-align:top;height:17px;line-height:17px;width:14px;letter-spacing:0;font-size:14.5px;text-align:center;position:relative;top:-1px;color:#2a2a2a;">月</span>  16 14:54 <b class="rd">adbd.service</b> -> <b class="rd">/lib/systemd/system/</b></div>
<div class="a term" style="left:0;top:240px"><b class="rd">adbd.service</b></div>
<div class="a term" style="left:0;top:257px">lrwxrwxrwx 1 jiawen jiawen  33 9<span style="display:inline-block;vertical-align:top;height:17px;line-height:17px;width:14px;letter-spacing:0;font-size:14.5px;text-align:center;position:relative;top:-1px;color:#2a2a2a;">月</span>  16 14:54 <b class="rd">async.service</b> -> <b class="rd">/lib/systemd/system</b></div>
<div class="a term" style="left:0;top:274px"><b class="rd">/async.service</b></div>
<div class="a term" style="left:0;top:291px">lrwxrwxrwx 1 jiawen jiawen  37 10<span style="display:inline-block;vertical-align:top;height:17px;line-height:17px;width:14px;letter-spacing:0;font-size:14.5px;text-align:center;position:relative;top:-1px;color:#2a2a2a;">月</span> 11 16:11 <b class="rd">hello.service</b> -> <b class="rd">/usr/lib/systemd/sy</b></div>
<div class="a term" style="left:0;top:308px"><b class="rd">stem/hello.service</b></div>
<div class="a term" style="left:0;top:325px">lrwxrwxrwx 1 jiawen jiawen  39 9<span style="display:inline-block;vertical-align:top;height:17px;line-height:17px;width:14px;letter-spacing:0;font-size:14.5px;text-align:center;position:relative;top:-1px;color:#2a2a2a;">月</span>  16 14:54 <b class="rd">resize-disk.service</b> -> <b class="rd">/lib/systemd/</b></div>
<div class="a term" style="left:0;top:342px"><b class="rd">system/resize-disk.service</b></div>
<div class="a term" style="left:0;top:359px">lrwxrwxrwx 1 jiawen jiawen  36 9<span style="display:inline-block;vertical-align:top;height:17px;line-height:17px;width:14px;letter-spacing:0;font-size:14.5px;text-align:center;position:relative;top:-1px;color:#2a2a2a;">月</span>  16 14:54 <b class="rd">rkwifibt.service</b> -> <b class="rd">/lib/systemd/sys</b></div>
<div class="a term" style="left:0;top:376px"><b class="rd">tem/rkwifibt.service</b></div>
<div class="a term" style="left:0;top:393px">lrwxrwxrwx 1 jiawen jiawen  36 9<span style="display:inline-block;vertical-align:top;height:17px;line-height:17px;width:14px;letter-spacing:0;font-size:14.5px;text-align:center;position:relative;top:-1px;color:#2a2a2a;">月</span>  16 14:54 <b class="rd">rockchip.service</b> -> <b class="rd">/lib/systemd/sys</b></div>
<div class="a term" style="left:0;top:410px"><b class="rd">tem/rockchip.service</b></div>
<div class="a term" style="left:0;top:427px"><b style="color:#0f7a12;font-weight:normal;-webkit-text-stroke:0.35px #0f7a12">jiawen@dev120</b>:<b style="color:#0a4a9e;font-weight:normal;-webkit-text-stroke:0.35px #0a4a9e">~/RK356X_LINUX_SDK/debian/overlay/etc/systemd/system/multi-user.tar</b></div>
<div class="a term" style="left:0;top:444px"><b style="color:#0a4a9e;font-weight:normal;-webkit-text-stroke:0.35px #0a4a9e">get.wants</b>$ </div>
</div>
<div class="a" style="left:313px;top:561px;width:8px;height:8px;border-radius:50%;background:#1a85d8"></div>
<div class="a" style="left:313px;top:595px;width:8px;height:8px;border-radius:50%;background:#1a85d8"></div>
<div class="a" style="left:313px;top:663px;width:8px;height:8px;border-radius:50%;background:#1a85d8"></div>
<div class="a" style="left:313px;top:714px;width:8px;height:8px;border-radius:50%;background:#1a85d8"></div>
<div class="a" style="left:313px;top:1003px;width:8px;height:8px;border-radius:50%;border:1px solid #b0b0b0"></div>
<svg style="left:860px;top:564px" width="16" height="15"><path d="M8 1.5 L15 14 H1 Z" fill="none" stroke="#616161" stroke-width="1.1"/><path d="M8 6 V10 M8 11.5 V12.8" stroke="#616161" stroke-width="1.2"/></svg>
<div class="a" style="left:403px;top:999px;width:7px;height:17px;border:1px solid #333"></div>
<div id="status" class="a">
<div class="a" style="left:0;top:0;width:103px;height:22px;background:#4d3b6e"></div>
<svg style="left:12px;top:5px" width="12" height="13"><path d="M0.5 3.25 L4.75 7.5 L0.5 11.75 M9.5 0 L5.25 3.9 L9.5 7.8" fill="none" stroke="#fff" stroke-width="1.1"/></svg>
<div class="a nw" style="left:27px;top:3.7px;line-height:16px;letter-spacing:-0.35px">SSH: dev120</div>
<svg style="left:112px;top:4px" width="12" height="14"><circle cx="3" cy="2.5" r="2" fill="none" stroke="#fff"/><circle cx="3" cy="11.5" r="2" fill="none" stroke="#fff"/><circle cx="9.5" cy="5" r="2" fill="none" stroke="#fff"/><path d="M3 4.5 V9.5 M9.5 7 C9.5 9 4 8.5 3.5 9.5" fill="none" stroke="#fff"/></svg>
<div class="a nw" style="left:128px;top:3.7px;line-height:16px">ubuntu20.04</div>
<svg style="left:211px;top:5px" width="14" height="12"><path d="M1.5 5.5 A5.5 5 0 0 1 11.5 4 M12.5 6.5 A5.5 5 0 0 1 2.5 8" fill="none" stroke="#fff" stroke-width="1.2"/><path d="M11.8 1 V4.3 H8.6 M2.2 11 V7.7 H5.4" fill="none" stroke="#fff" stroke-width="1.1"/></svg>
<svg style="left:242px;top:4px" width="13" height="13"><circle cx="6.5" cy="6.5" r="5.8" fill="none" stroke="#fff" stroke-width="1.1"/><path d="M4 4 L9 9 M9 4 L4 9" stroke="#fff" stroke-width="1.1"/></svg>
<div class="a nw" style="left:258px;top:3.7px;line-height:16px">0</div>
<svg style="left:268px;top:4px" width="14" height="13"><path d="M7 0.8 L13.3 12.3 H0.7 Z" fill="none" stroke="#fff" stroke-width="1.1"/><path d="M7 4.5 V8.5 M7 9.8 V11" stroke="#fff" stroke-width="1.1"/></svg>
<div class="a nw" style="left:285px;top:3.7px;line-height:16px">0</div>
<div class="a nw" style="left:307px;top:3.7px;line-height:16px">Git Graph</div>
<svg style="left:373px;top:6px" width="14" height="10"><path d="M1 6 C4 0 10 0 13 6" fill="none" stroke="#fff" stroke-width="1.2"/><circle cx="7" cy="6" r="2" fill="none" stroke="#fff" stroke-width="1.1"/></svg>
<div class="a nw" style="left:405px;top:3.7px;line-height:16px">Chinese (Simplified)</div>
<div class="a nw" style="left:557px;top:3.7px;line-height:16px">UTF-8</div>
<div class="a nw" style="left:606px;top:3.7px;line-height:16px">LF</div>
<div class="a nw" style="left:634px;top:3.7px;line-height:16px">纯文本</div>
<div class="a nw" style="left:686px;top:3.7px;line-height:16px">中文&nbsp;&nbsp;(简体)</div>
<svg style="left:775px;top:6px" width="13" height="10"><path d="M0 5 H12 M7.5 0.8 L12 5 L7.5 9.2" fill="none" stroke="#fff" stroke-width="1.1"/></svg>
<div class="a nw" style="left:804px;top:3.7px;line-height:16px">自动</div>
<svg style="left:845px;top:6px" width="14" height="10"><path d="M1 6 C4 0 10 0 13 6" fill="none" stroke="#fff" stroke-width="1.2"/><circle cx="7" cy="6" r="2" fill="none" stroke="#fff" stroke-width="1.1"/></svg>
<div class="a nw" style="left:862px;top:3.7px;line-height:16px">开启</div>
<svg style="left:900px;top:4px" width="16" height="15"><path d="M5 3.6 V1.3 H14.3 V6.7 H12.2 L10.4 8.3 V6.7 H9.5" fill="none" stroke="#fff" stroke-width="1.1"/><circle cx="6.1" cy="6.6" r="2.3" fill="none" stroke="#fff" stroke-width="1.1"/><path d="M1.5 13.2 C2 9.3 10.3 9.3 10.8 13.2" fill="none" stroke="#fff" stroke-width="1.1"/></svg>
<svg style="left:931px;top:4px" width="14" height="15"><path d="M1.8 10.6 H11.2 C10.2 9.6 9.9 8.6 9.9 6.2 C9.9 3 8.6 1.2 6.5 1.2 C4.4 1.2 3.1 3 3.1 6.2 C3.1 8.6 2.8 9.6 1.8 10.6 Z M5.2 12 C5.6 13 7.4 13 7.8 12" fill="none" stroke="#fff" stroke-width="1.1" stroke-linejoin="round"/></svg>
</div></body></html>
